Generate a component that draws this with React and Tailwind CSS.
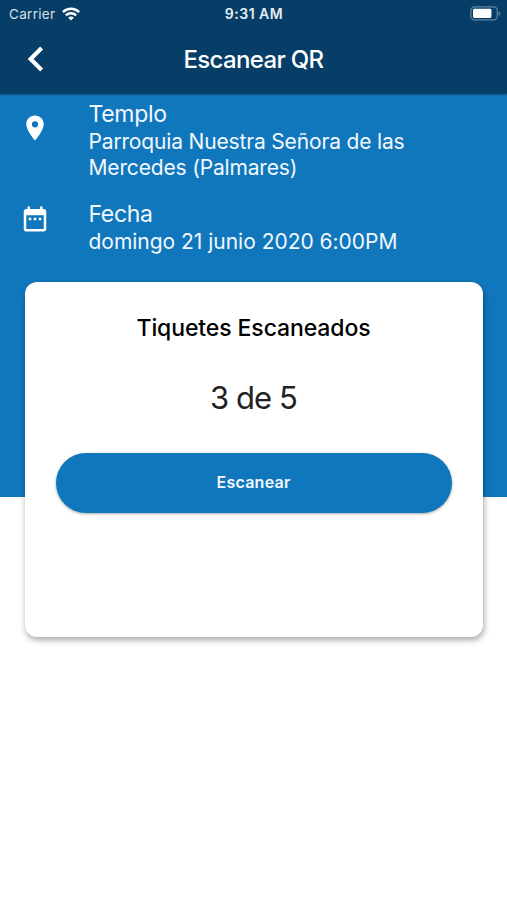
import React from "react";
import { MdChevronLeft, MdDateRange, MdLocationOn } from "react-icons/md";

const details = [
    {
        label: "Templo",
        value: "Parroquia Nuestra Señora de las Mercedes (Palmares)",
        icon: MdLocationOn,
        iconClass: "mt-3",
        valueClass: "tracking-[-0.16px]",
    },
    {
        label: "Fecha",
        value: "domingo 21 junio 2020 6:00PM",
        icon: MdDateRange,
        iconClass: "mt-[3px]",
        valueClass: "tracking-[-0.02px]",
    },
];

function WifiIcon() {
    return (
        <svg viewBox="0 0 18 14" className="mb-px ml-[7px] h-3.5 w-[18px]" fill="none" stroke="currentColor" strokeWidth="2.5">
            <path d="M.9 5.1a11.5 11.5 0 0 1 16.2 0" />
            <path d="M3.9 8.3a7.2 7.2 0 0 1 10.2 0" />
            <path d="M9 13.6 6.2 10.8a4 4 0 0 1 5.6 0z" fill="currentColor" stroke="none" />
        </svg>
    );
}

function BatteryIcon() {
    return (
        <svg viewBox="0 0 31 15" className="h-[15px] w-[31px]" fill="none">
            <rect x="0.9" y="0.9" width="26.4" height="13" rx="3.6" stroke="#6285a0" strokeWidth="1.2" />
            <rect x="3" y="2.8" width="18.4" height="9.2" rx="1.4" fill="white" />
            <path d="M28.6 5.2v4.6c1-.4 1.7-1.3 1.7-2.3s-.7-1.9-1.7-2.3z" fill="#6285a0" />
        </svg>
    );
}

function StatusBar() {
    return (
        <div className="grid h-7 grid-cols-[1fr_auto_1fr] items-center pl-[8px] pr-[7px] text-[13.5px] leading-none">
            <div className="flex items-center pl-px">
                <span className="pt-px tracking-[0.3px] text-[#d5e0e8]">Carrier</span>
                <WifiIcon />
            </div>
            <span className="text-center text-[14px] font-semibold tracking-[0.5px] text-[#e6edf2]">9:31 AM</span>
            <div className="-mr-px flex justify-end pb-px">
                <BatteryIcon />
            </div>
        </div>
    );
}

function Header() {
    return (
        <header className="relative z-10 h-[94px] bg-[#063e67] text-white shadow-[0_1px_2px_rgba(0,0,0,0.3)]">
            <StatusBar />
            <div className="grid h-16 grid-cols-[64px_1fr_64px] items-center">
                <button type="button" aria-label="Volver" className="mb-[2px] ml-[11px] w-[49px]">
                    <MdChevronLeft className="h-[50px] w-[50px]" />
                </button>
                <h1 className="text-center text-[24px] font-medium tracking-[-0.65px]">Escanear QR</h1>
            </div>
        </header>
    );
}

function Detail({ label, value, icon: Icon, iconClass, valueClass }) {
    return (
        <div className="flex pl-5 text-[#f2f8fd]">
            <Icon className={`mr-[38.5px] h-[30px] w-[30px] shrink-0 text-white ${iconClass}`} />
            <div className="w-[350px]">
                <div className="-mt-px mb-px text-[23px] leading-7 tracking-[-0.3px]">{label}</div>
                <div className={`text-[21px] leading-[26px] ${valueClass}`}>{value}</div>
            </div>
        </div>
    );
}

export default function App() {
    return (
        <div className="h-[900px] w-[507px] overflow-hidden bg-white font-['Inter',sans-serif]">
            <Header />
            <main className="h-[403px] bg-[#1177bd] pt-[7px]">
                <div className="flex h-[181px] flex-col gap-5">
                    {details.map((detail) => (
                        <Detail key={detail.label} {...detail} />
                    ))}
                </div>
                <section className="mr-6 ml-[25px] flex h-[355px] flex-col items-center rounded-xl bg-white px-[31px] pt-[30px] shadow-[1px_3px_6px_rgba(0,0,0,0.35)]">
                    <h2 className="pr-px text-[23px] leading-8 font-medium tracking-[-0.1px] text-black">Tiquetes Escaneados</h2>
                    <p className="mt-[34px] pr-px text-[31px] leading-10 tracking-[-0.9px] text-[#222222]">3 de 5</p>
                    <button
                        type="button"
                        className="mt-[35px] h-[60px] w-full rounded-full bg-[#1177bd] pr-px pb-[2px] text-[16px] font-semibold tracking-[0.25px] text-[#f2f8fd] shadow-[0_1px_3px_rgba(0,0,0,0.35)]"
                    >
                        Escanear
                    </button>
                </section>
            </main>
        </div>
    );
}
